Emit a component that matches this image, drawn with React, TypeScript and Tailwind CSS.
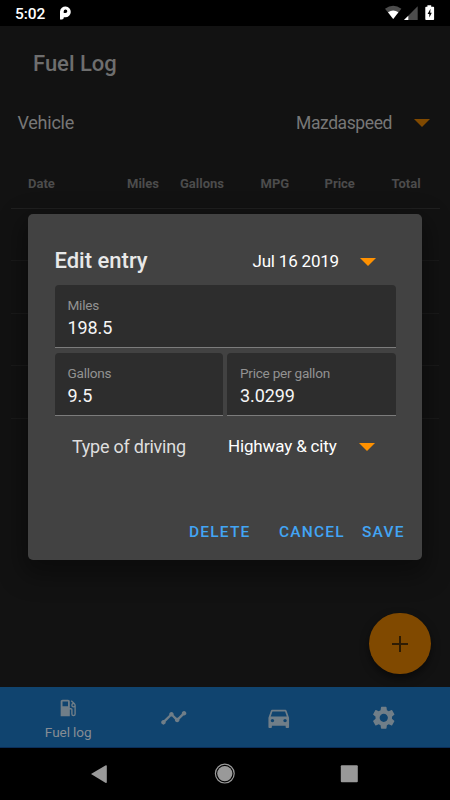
import React, { FC, ReactNode } from "react";
import {
  MdDirectionsCar,
  MdLocalGasStation,
  MdSettings,
  MdTimeline,
} from "react-icons/md";

interface ArrowProps {
  className?: string;
}

const Arrow: FC<ArrowProps> = ({ className }) => (
  <svg viewBox="0 0 16 8" className={`h-2 w-4 shrink-0 ${className}`}>
    <path d="M0 0h16L8 8z" fill="currentColor" />
  </svg>
);

const StatusBar = () => (
  <div className="flex h-[26px] items-center bg-black pl-[15px] text-white">
    <span className="w-[45px] pt-[2px] text-[15.5px] leading-[26px] font-medium tracking-[-0.1px]">
      5:02
    </span>
    <svg viewBox="0 0 11 14" className="h-[14px] w-[11px]">
      <path
        fillRule="evenodd"
        fill="#fff"
        d="M0 13.6V5.4a5.4 5.4 0 1 1 5.4 5.9h-1.6v.3q0 2-2 2zM3.7 7.1h1.7a1.8 1.8 0 1 0-1.7-1.8z"
      />
    </svg>
    <svg viewBox="0 0 50 16" className="ml-auto mr-[15px] h-4 w-[50px]">
      <path d="M0 3.7Q8.2-2.3 16.4 3.7L8.2 14z" fill="#4d4d4d" />
      <path d="M3 7.3Q8.2 3.6 13.4 7.3L8.2 14z" fill="#fff" />
      <path d="M32.7 1.3V15H19z" fill="#4d4d4d" />
      <path d="M23.3 10.7V15H19z" fill="#fff" />
      <path
        d="M42.4 0.3h3.8v1.5h2.1q.8 0 .8.8v11.6q0 .8-.8.8h-7.2q-.8 0-.8-.8V2.6q0-.8.8-.8h1.3z"
        fill="#fff"
      />
      <path d="M45.5 3.7 42.6 9h1.7v3.5l2.5-4.8h-1.6z" fill="#000" />
    </svg>
  </div>
);

const TableHeader = () => (
  <div className="mx-[10.5px] flex h-[51px] items-center border-b border-[#202020] pt-[2px] pl-[17.5px] text-[13px] font-bold text-[#4c4c4c]">
    <span className="w-[99px]">Date</span>
    <span className="w-[53px]">Miles</span>
    <span className="w-[80.5px]">Gallons</span>
    <span className="w-[64px]">MPG</span>
    <span className="w-[67px]">Price</span>
    <span>Total</span>
  </div>
);

interface FieldProps {
  label: string;
  value: string;
}

const Field: FC<FieldProps> = ({ label, value }) => (
  <div className="flex h-[63px] flex-1 flex-col rounded-t-[4px] border-b border-[#7c7c7c] bg-[#2d2d2d] pt-[11px] pl-[13px]">
    <span className="text-[13.6px] leading-[18px] tracking-[-0.25px] text-[#929292]">
      {label}
    </span>
    <span className="mt-[2px] text-[18px] leading-[24px] tracking-[-0.1px] text-[#f5f5f5]">
      {value}
    </span>
  </div>
);

const EditDialog = () => (
  <div className="h-[345.5px] w-[394px] rounded-[5px] bg-[#424242] pt-[30px] pl-[26.5px] shadow-[0_10px_24px_6px_rgba(0,0,0,0.35)]">
    <div className="flex h-[32px] items-center">
      <span className="w-[198px] text-[22px] font-medium text-[#e8e8e8]">
        Edit entry
      </span>
      <span className="w-[107.5px] pt-[3px] text-[17px] tracking-[-0.2px] text-white">
        Jul 16 2019
      </span>
      <Arrow className="mt-[3px] text-[#ff9100]" />
    </div>
    <div className="mt-[9px] flex w-[341px]">
      <Field label="Miles" value="198.5" />
    </div>
    <div className="mt-[5px] flex w-[341px] gap-1">
      <Field label="Gallons" value="9.5" />
      <Field label="Price per gallon" value="3.0299" />
    </div>
    <div className="mt-[15px] flex h-[32px] items-center pl-[17.5px]">
      <span className="w-[156px] pb-[2px] text-[18px] tracking-[-0.25px] text-[#dedede]">
        Type of driving
      </span>
      <span className="w-[131px] text-[17px] tracking-[-0.15px] text-white">
        Highway &amp; city
      </span>
      <Arrow className="text-[#ff9100]" />
    </div>
    <div className="mt-[54px] flex h-[32px] items-center pl-[134.5px] text-[15.5px] font-medium tracking-[1.2px] text-[#42a5f5]">
      <span className="w-[90px]">DELETE</span>
      <span className="w-[83px]">CANCEL</span>
      <span>SAVE</span>
    </div>
  </div>
);

interface TabProps {
  icon: ReactNode;
  label?: string;
}

const Tab: FC<TabProps> = ({ icon, label }) => (
  <div className="flex w-[105.2px] flex-col items-center justify-center pt-[2px] text-[#707e88]">
    {icon}
    {label && (
      <span className="mt-[3px] text-[13.6px] leading-[20px] tracking-[-0.1px] text-[#878d94]">
        {label}
      </span>
    )}
  </div>
);

const tabs: TabProps[] = [
  { icon: <MdLocalGasStation size={22} className="mt-[2px]" />, label: "Fuel log" },
  { icon: <MdTimeline size={27.5} /> },
  { icon: <MdDirectionsCar size={27.5} /> },
  { icon: <MdSettings size={27.5} /> },
];

const App = () => {
  return (
    <div className="relative flex h-[800px] w-[450px] flex-col overflow-hidden bg-[#121212] font-['Roboto',sans-serif]">
      <StatusBar />
      <main className="flex flex-1 flex-col">
        <h1 className="mt-[22px] pl-[33px] text-[22px] leading-[32px] font-medium text-[#6e6e6e]">
          Fuel Log
        </h1>
        <div className="mt-[27px] flex h-[32px] items-center pl-[17.5px] text-[#777]">
          <span className="w-[278.5px] pb-[2px] text-[18px] tracking-[-0.25px]">
            Vehicle
          </span>
          <span className="w-[118px] text-[17.5px] tracking-[-0.4px]">
            Mazdaspeed
          </span>
          <Arrow className="text-[#804900]" />
        </div>
        <div className="h-[19px]" />
        <TableHeader />
        {[0, 1, 2, 3].map((i) => (
          <div key={i} className="mx-[11px] h-[52.4px] border-b border-[#1a1a1a]" />
        ))}
        <button className="mt-auto mr-[19.5px] mb-[13px] flex size-[61.5px] items-center justify-center self-end rounded-full bg-[#804900] shadow-[0_4px_8px_rgba(0,0,0,0.5)]">
          <svg viewBox="0 0 16 16" className="mt-px size-4">
            <path d="M8 0v16M0 8h16" stroke="#2e1c04" strokeWidth="2" />
          </svg>
        </button>
      </main>
      <nav className="flex h-[61px] border-b border-[#0b2e59] bg-[#10446f] pl-[15.6px]">
        {tabs.map((tab, i) => (
          <Tab key={i} {...tab} />
        ))}
      </nav>
      <div className="flex h-[52px] items-center bg-black pl-[91px]">
        <svg viewBox="0 0 270 22" className="h-[22px] w-[270px]">
          <g fill="#999">
            <path d="M0 11 14.4 2.4q1.4-.7 1.4.7v16q0 1.4-1.4.7z" />
            <circle cx="133.8" cy="10.6" r="7.6" />
            <circle
              cx="133.8"
              cy="10.6"
              r="9.4"
              fill="none"
              stroke="#999"
              strokeWidth="1.2"
            />
            <rect x="249.8" y="2.2" width="17" height="17" rx="1" />
          </g>
        </svg>
      </div>
      <div className="absolute top-[214px] left-[28px]">
        <EditDialog />
      </div>
    </div>
  );
};

export default App;
